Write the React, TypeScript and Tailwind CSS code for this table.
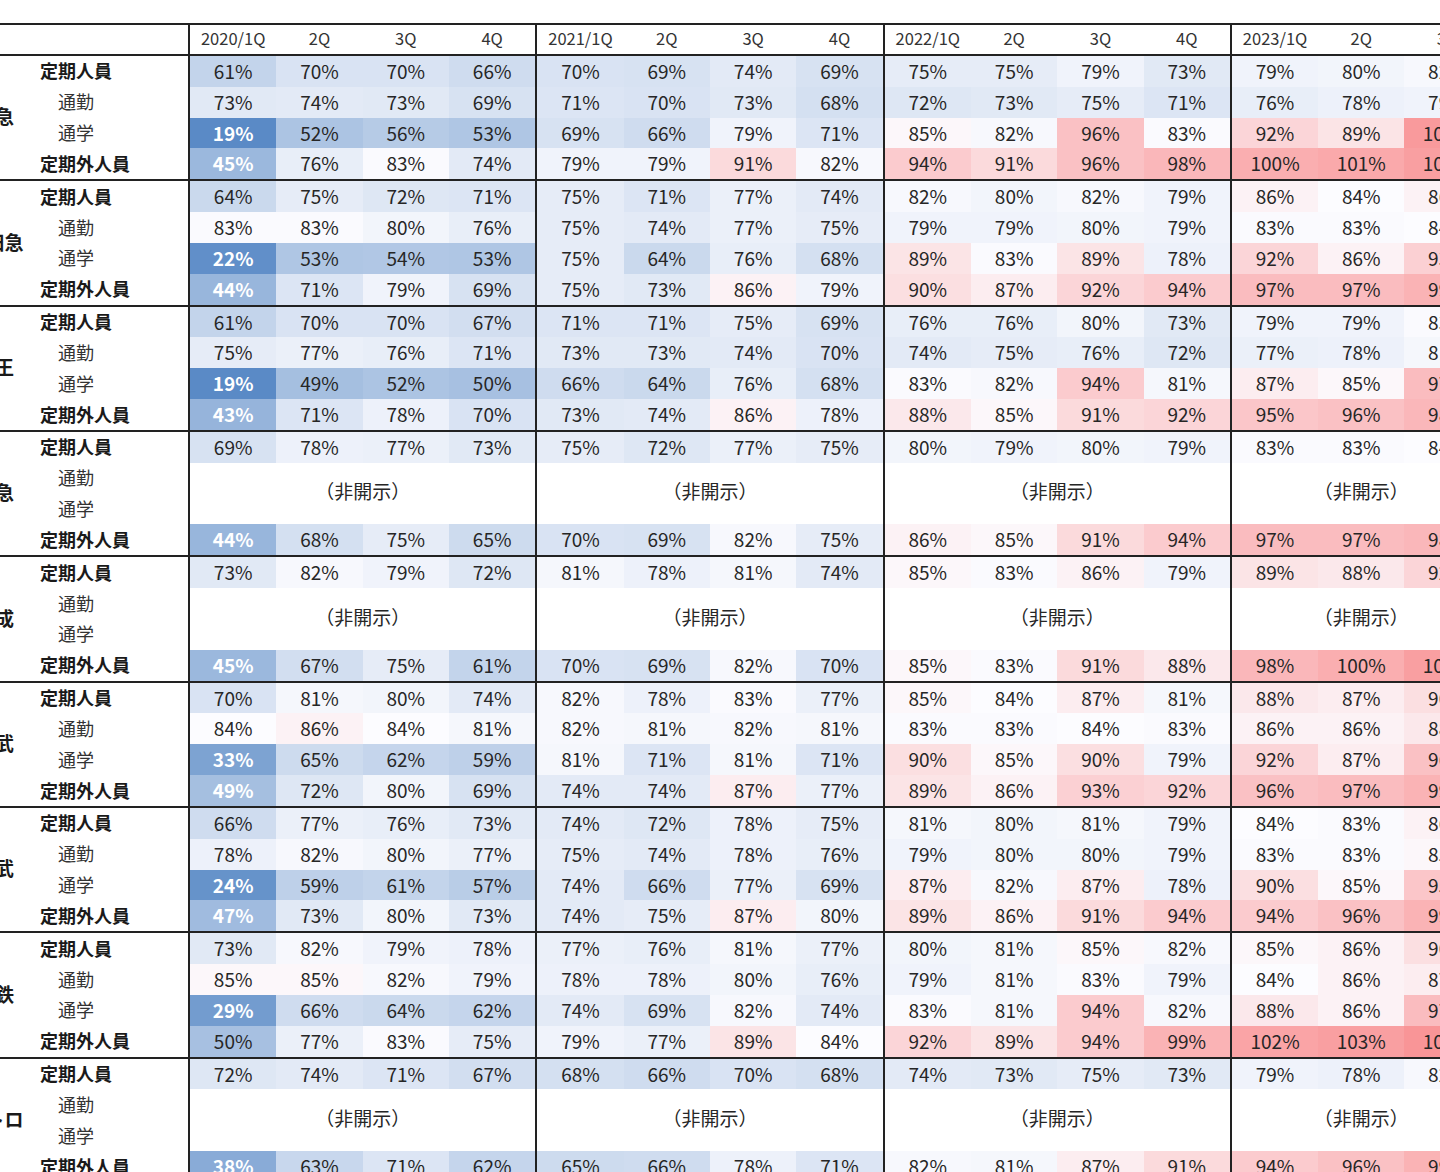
type Row = number[] | null;

interface Company {
  name: string;
  rows: [Row, Row, Row, Row];
}

const LABELS = ['定期人員', '通勤', '通学', '定期外人員'];
const YEARS = ['2020', '2021', '2022', '2023'];
// 2023 only has three quarters so far
const QUARTERS = [4, 4, 4, 3];

const companies: Company[] = [
  {
    name: '東急',
    rows: [
      [61, 70, 70, 66, 70, 69, 74, 69, 75, 75, 79, 73, 79, 80, 82],
      [73, 74, 73, 69, 71, 70, 73, 68, 72, 73, 75, 71, 76, 78, 79],
      [19, 52, 56, 53, 69, 66, 79, 71, 85, 82, 96, 83, 92, 89, 104],
      [45, 76, 83, 74, 79, 79, 91, 82, 94, 91, 96, 98, 100, 101, 103],
    ],
  },
  {
    name: '小田急',
    rows: [
      [64, 75, 72, 71, 75, 71, 77, 74, 82, 80, 82, 79, 86, 84, 86],
      [83, 83, 80, 76, 75, 74, 77, 75, 79, 79, 80, 79, 83, 83, 84],
      [22, 53, 54, 53, 75, 64, 76, 68, 89, 83, 89, 78, 92, 86, 93],
      [44, 71, 79, 69, 75, 73, 86, 79, 90, 87, 92, 94, 97, 97, 99],
    ],
  },
  {
    name: '京王',
    rows: [
      [61, 70, 70, 67, 71, 71, 75, 69, 76, 76, 80, 73, 79, 79, 83],
      [75, 77, 76, 71, 73, 73, 74, 70, 74, 75, 76, 72, 77, 78, 81],
      [19, 49, 52, 50, 66, 64, 76, 68, 83, 82, 94, 81, 87, 85, 97],
      [43, 71, 78, 70, 73, 74, 86, 78, 88, 85, 91, 92, 95, 96, 98],
    ],
  },
  {
    name: '京急',
    rows: [
      [69, 78, 77, 73, 75, 72, 77, 75, 80, 79, 80, 79, 83, 83, 84],
      null,
      null,
      [44, 68, 75, 65, 70, 69, 82, 75, 86, 85, 91, 94, 97, 97, 98],
    ],
  },
  {
    name: '京成',
    rows: [
      [73, 82, 79, 72, 81, 78, 81, 74, 85, 83, 86, 79, 89, 88, 92],
      null,
      null,
      [45, 67, 75, 61, 70, 69, 82, 70, 85, 83, 91, 88, 98, 100, 103],
    ],
  },
  {
    name: '東武',
    rows: [
      [70, 81, 80, 74, 82, 78, 83, 77, 85, 84, 87, 81, 88, 87, 90],
      [84, 86, 84, 81, 82, 81, 82, 81, 83, 83, 84, 83, 86, 86, 88],
      [33, 65, 62, 59, 81, 71, 81, 71, 90, 85, 90, 79, 92, 87, 96],
      [49, 72, 80, 69, 74, 74, 87, 77, 89, 86, 93, 92, 96, 97, 99],
    ],
  },
  {
    name: '西武',
    rows: [
      [66, 77, 76, 73, 74, 72, 78, 75, 81, 80, 81, 79, 84, 83, 86],
      [78, 82, 80, 77, 75, 74, 78, 76, 79, 80, 80, 79, 83, 83, 85],
      [24, 59, 61, 57, 74, 66, 77, 69, 87, 82, 87, 78, 90, 85, 95],
      [47, 73, 80, 73, 74, 75, 87, 80, 89, 86, 91, 94, 94, 96, 99],
    ],
  },
  {
    name: '相鉄',
    rows: [
      [73, 82, 79, 78, 77, 76, 81, 77, 80, 81, 85, 82, 85, 86, 90],
      [85, 85, 82, 79, 78, 78, 80, 76, 79, 81, 83, 79, 84, 86, 87],
      [29, 66, 64, 62, 74, 69, 82, 74, 83, 81, 94, 82, 88, 86, 97],
      [50, 77, 83, 75, 79, 77, 89, 84, 92, 89, 94, 99, 102, 103, 105],
    ],
  },
  {
    name: 'メトロ',
    rows: [
      [72, 74, 71, 67, 68, 66, 70, 68, 74, 73, 75, 73, 79, 78, 82],
      null,
      null,
      [38, 63, 71, 62, 65, 66, 78, 71, 82, 81, 87, 91, 94, 96, 99],
    ],
  },
];

// excel-like 3 colour scale: blue (min) - white (mid) - red (max)
function heat(v: number) {
  const lo = 19;
  const mid = 84;
  const hi = 114;
  const white = [252, 252, 255];
  let target: number[];
  let t: number;
  if (v <= mid) {
    target = [90, 138, 198];
    t = (mid - v) / (mid - lo);
  } else {
    target = [248, 105, 107];
    t = Math.min(1, (v - mid) / (hi - mid));
  }
  const c = white.map((w, i) => Math.round(w + (target[i] - w) * t));
  return `rgb(${c[0]}, ${c[1]}, ${c[2]})`;
}

function Cell({ v, col }: { v: number; col: number }) {
  const strong = col === 0 && v < 50;
  return (
    <div
      className={
        'flex items-center justify-center pb-[2px] text-[19px] leading-none ' +
        (strong ? 'font-bold text-white' : 'text-[#262626]')
      }
      style={{ backgroundColor: heat(v) }}
    >
      {v}%
    </div>
  );
}

function YearBlock({ company, yi }: { company: Company; yi: number }) {
  const n = QUARTERS[yi];
  const start = yi * 4;
  const hidden = company.rows[1] === null;
  const slice = (r: Row) => (r ? r.slice(start, start + n) : []);
  return (
    <div
      className={
        'shrink-0 border-l-2 border-[#222] grid grid-rows-4 ' +
        (n === 4 ? 'w-[347.33px] grid-cols-4' : 'w-[262.5px] grid-cols-3 border-r-2')
      }
    >
      {slice(company.rows[0]).map((v, i) => (
        <Cell key={'a' + i} v={v} col={start + i} />
      ))}
      {hidden ? (
        <div
          className={
            'row-span-2 flex items-center justify-center pb-[4px] bg-white text-[19px] text-[#262626] ' +
            (n === 4 ? 'col-span-4' : 'col-span-3')
          }
        >
          （非開示）
        </div>
      ) : (
        <>
          {slice(company.rows[1]).map((v, i) => (
            <Cell key={'b' + i} v={v} col={start + i} />
          ))}
          {slice(company.rows[2]).map((v, i) => (
            <Cell key={'c' + i} v={v} col={start + i} />
          ))}
        </>
      )}
      {slice(company.rows[3]).map((v, i) => (
        <Cell key={'d' + i} v={v} col={start + i} />
      ))}
    </div>
  );
}

function CompanyGroup({ company }: { company: Company }) {
  return (
    <div className="flex h-[125.33px] border-t-2 border-[#222]">
      <div className="w-[90px] shrink-0 flex items-center justify-center pb-[2px] text-[19px] font-bold text-[#1a1a1a] whitespace-nowrap">
        {company.name}
      </div>
      <div className="w-[148px] shrink-0 flex flex-col">
        {LABELS.map((l, i) => (
          <div
            key={l}
            className={
              'flex-1 flex items-center pb-[2px] text-[18px] leading-none ' +
              (i === 0 || i === 3 ? 'font-bold text-[#1a1a1a]' : 'pl-[18px] text-[#333]')
            }
          >
            {l}
          </div>
        ))}
      </div>
      {YEARS.map((y, yi) => (
        <YearBlock key={y} company={company} yi={yi} />
      ))}
    </div>
  );
}

export default function App() {
  return (
    <div className="w-[1440px] h-[1172px] overflow-hidden bg-white font-['Noto_Sans_CJK_JP','Noto_Sans',sans-serif]">
      <div className="ml-[-50px] w-[1700px] pt-[23px]">
        <div className="flex h-[31px] border-t-2 border-[#222]">
          <div className="w-[238px] shrink-0" />
          {YEARS.map((y, yi) => (
            <div
              key={y}
              className={
                'shrink-0 border-l-2 border-[#222] grid ' +
                (QUARTERS[yi] === 4 ? 'w-[347.33px] grid-cols-4' : 'w-[262.5px] grid-cols-3 border-r-2')
              }
            >
              {[`${y}/1Q`, '2Q', '3Q', '4Q'].slice(0, QUARTERS[yi]).map((q) => (
                <div key={q} className="flex items-center justify-center pb-[2px] text-[16.5px] text-[#333]">
                  {q}
                </div>
              ))}
            </div>
          ))}
        </div>
        {companies.map((c) => (
          <CompanyGroup key={c.name} company={c} />
        ))}
      </div>
    </div>
  );
}
